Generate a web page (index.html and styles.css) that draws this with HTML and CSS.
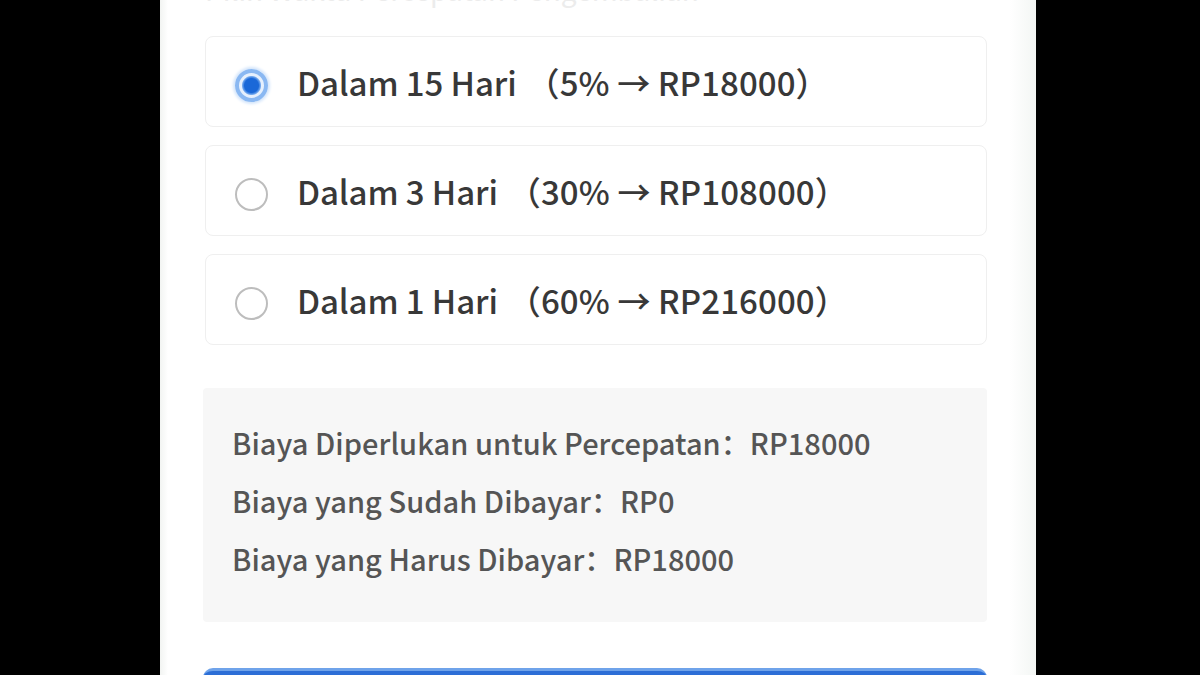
FILE: index.html
```html
<!DOCTYPE html>
<html>
<head>
<meta charset="utf-8">
<link rel="stylesheet" href="styles.css">
</head>
<body>
<div class="screen">
  <div class="panel">
    <div class="title">Pilih Waktu Percepatan Pengembalian</div>
    <div class="options">
      <div class="option">
        <span class="radio checked"></span>
        <span class="label">Dalam 15 Hari</span>
        <span class="detail">（5% → RP18000）</span>
      </div>
      <div class="option">
        <span class="radio"></span>
        <span class="label">Dalam 3 Hari</span>
        <span class="detail">（30% → RP108000）</span>
      </div>
      <div class="option">
        <span class="radio"></span>
        <span class="label">Dalam 1 Hari</span>
        <span class="detail">（60% → RP216000）</span>
      </div>
    </div>
    <div class="summary">
      <div class="line">Biaya Diperlukan untuk Percepatan：RP18000</div>
      <div class="line">Biaya yang Sudah Dibayar：RP0</div>
      <div class="line">Biaya yang Harus Dibayar：RP18000</div>
    </div>
    <div class="button"></div>
  </div>
</div>
</body>
</html>
```
FILE: styles.css
```css
html, body {
  margin: 0;
  padding: 0;
  background: #000;
  width: 1200px;
  height: 675px;
  overflow: hidden;
}
.screen {
  display: flex;
  height: 675px;
  padding-left: 160px;
}
.panel {
  width: 876px;
  height: 675px;
  background: linear-gradient(to right, #f2f4f2 0, #fff 8px, #fff 850px, #f3f6f4 876px);
  box-sizing: border-box;
  padding: 0 49px 0 45px;
  font-family: "Noto Sans CJK SC", "Noto Sans", sans-serif;
  overflow: hidden;
}
.title {
  margin-top: -26px;
  height: 30px;
  line-height: 30px;
  font-size: 28px;
  color: #ececec;
  margin-bottom: 32px;
  white-space: nowrap;
}
.options {
  display: flex;
  flex-direction: column;
  gap: 18px;
}
.option {
  height: 91px;
  box-sizing: border-box;
  border: 1.5px solid #efefef;
  border-radius: 8px;
  display: flex;
  align-items: center;
  padding-left: 29px;
  color: #383838;
  font-size: 33px;
  font-weight: 500;
  white-space: nowrap;
}
.radio {
  width: 33px;
  height: 33px;
  box-sizing: border-box;
  border-radius: 50%;
  border: 2.5px solid #bdbdbd;
  margin-right: 29px;
  flex: none;
  margin-top: 8px;
}
.radio.checked {
  border: 4px solid #8ab8f2;
  background: radial-gradient(circle, #1a68d8 0, #1a68d8 7px, #6fa6ee 9px, #e6f0fd 10px);
  box-shadow: 0 0 3px 2px #d3e5fb;
}
.label {
  letter-spacing: -0.1px;
}
.detail {
  margin-left: 10px;
  letter-spacing: 0.1px;
}
.summary {
  margin-top: 43px;
  margin-left: -2px;
  height: 234px;
  box-sizing: border-box;
  background: #f7f7f7;
  border-radius: 4px;
  padding: 25px 0 0 29px;
  display: flex;
  flex-direction: column;
}
.line {
  height: 58px;
  line-height: 58px;
  font-size: 29px;
  font-weight: 500;
  color: #555;
  white-space: nowrap;
  letter-spacing: 0.05px;
}
.button {
  margin-top: 46px;
  margin-left: -2px;
  height: 60px;
  background: #2c6ed6;
  border-top: 3px solid #6fa3ea;
  border-radius: 10px 10px 0 0;
}
```
